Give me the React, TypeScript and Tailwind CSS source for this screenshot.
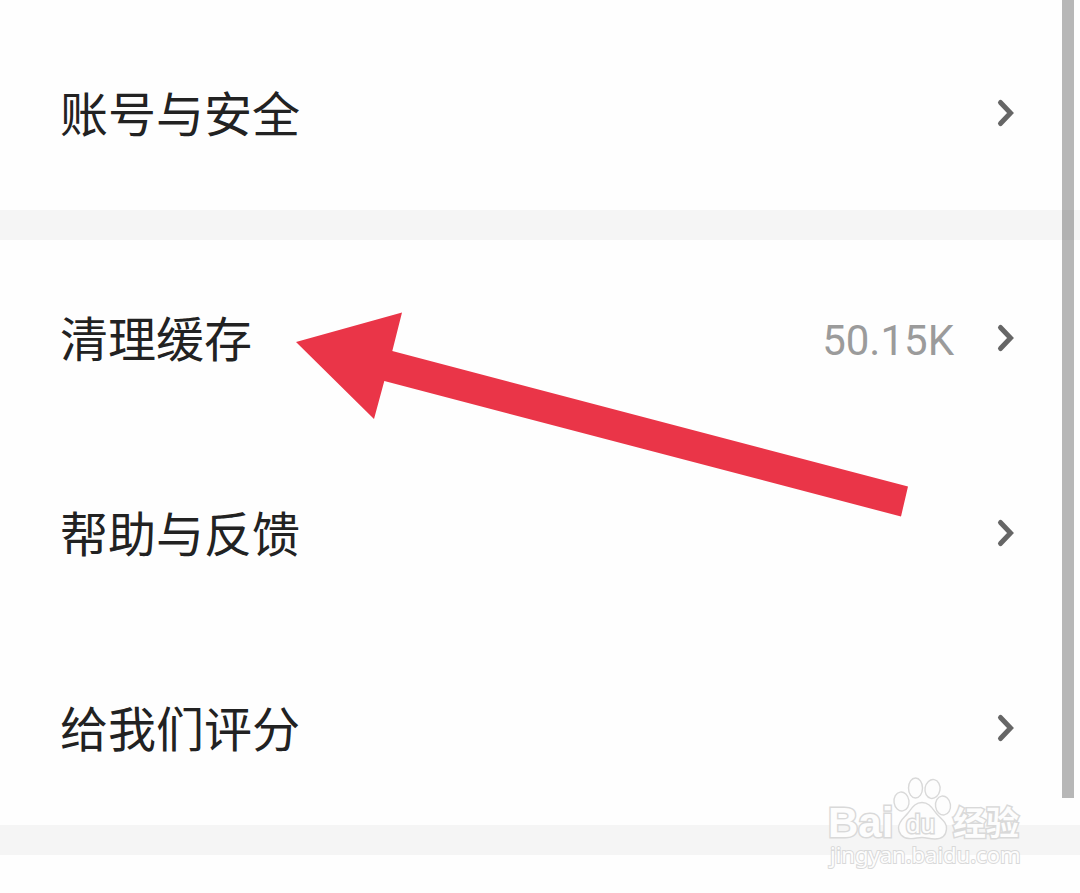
type RowProps = {
  label: string;
  value?: string;
};

function Chevron() {
  return (
    <svg
      className="h-8 w-5 flex-none"
      viewBox="0 0 20 32"
      fill="none"
      stroke="#666666"
      strokeWidth="5"
      strokeLinecap="round"
      strokeLinejoin="miter"
      aria-hidden="true"
    >
      <path d="M4.5 5.5L14.5 16L4.5 26.5" />
    </svg>
  );
}

function Row({ label, value }: RowProps) {
  return (
    <li>
      <button
        type="button"
        className="flex h-[195px] w-full items-center pr-16 pl-[60px] text-left"
      >
        <span className="flex-1 pb-1 text-5xl text-[#222222]">{label}</span>
        {value && (
          <span className="mt-1.5 mr-[42px] font-[Roboto,sans-serif] text-[42px] text-[#9b9b9b]">
            {value}
          </span>
        )}
        <Chevron />
      </button>
    </li>
  );
}

function Divider() {
  return <div className="h-[30px] bg-[#f5f5f5]" />;
}

function Arrow() {
  return (
    <svg
      className="pointer-events-none absolute top-[312px] left-[295px] h-[206px] w-[614px]"
      viewBox="295 312 614 206"
      aria-hidden="true"
    >
      <polygon
        fill="#ea3548"
        points="296,342 402,312.5 392.3,351 908,486.5 901,516.5 384.3,381 374,419"
      />
    </svg>
  );
}

function Watermark() {
  return (
    <svg
      className="pointer-events-none absolute top-[770px] right-[50px] h-[110px] w-[210px]"
      viewBox="820 770 210 110"
      fill="#fdfdfd"
      stroke="#d9d9d9"
      strokeWidth="1.4"
      aria-label="Baidu"
    >
      <g fontFamily="'Liberation Sans', 'Noto Sans CJK SC', sans-serif" fontWeight="700">
        <text x="828" y="837" fontSize="42" strokeWidth="3" paintOrder="stroke">
          Bai
        </text>
        <ellipse cx="901.5" cy="801.5" rx="7.5" ry="9.5" transform="rotate(-8 901.5 801.5)" />
        <ellipse cx="915.5" cy="788" rx="7" ry="10" />
        <ellipse cx="932.5" cy="789" rx="7.5" ry="9.5" transform="rotate(10 932.5 789)" />
        <ellipse cx="943" cy="805.5" rx="7.5" ry="9.5" transform="rotate(-8 943 805.5)" />
        <path d="M922 802.500C929 802.500 932 808 936 813C941 819 947 822 946.500 829C946 836 941 839 935 839C929 839 927 837.500 922 837.500C917 837.500 915 839 909 838.500C902 838 898.500 833 898.500 828C898.500 821 904 818 908 813C912 808 915 802.500 922 802.500Z" />
        <text x="906" y="833" fontSize="26" fontWeight="400" strokeWidth="3" paintOrder="stroke">
          du
        </text>
        <text x="953" y="835" fontSize="33" strokeWidth="3" paintOrder="stroke">
          经验
        </text>
      </g>
      <text
        x="830"
        y="863"
        fontSize="22"
        fontFamily="'Noto Sans', sans-serif"
        strokeWidth="2"
        paintOrder="stroke"
      >
        jingyan.baidu.com
      </text>
    </svg>
  );
}

export default function App() {
  return (
    <main className="relative min-h-screen bg-[#fefefe] pt-[15px] font-['Noto_Sans_CJK_SC',sans-serif]">
      <ul>
        <Row label="账号与安全" />
      </ul>
      <Divider />
      <ul>
        <Row label="清理缓存" value="50.15K" />
        <Row label="帮助与反馈" />
        <Row label="给我们评分" />
      </ul>
      <Divider />
      <div className="absolute top-0 right-1.5 h-[798px] w-3 bg-black/28" />
      <Arrow />
      <Watermark />
    </main>
  );
}
